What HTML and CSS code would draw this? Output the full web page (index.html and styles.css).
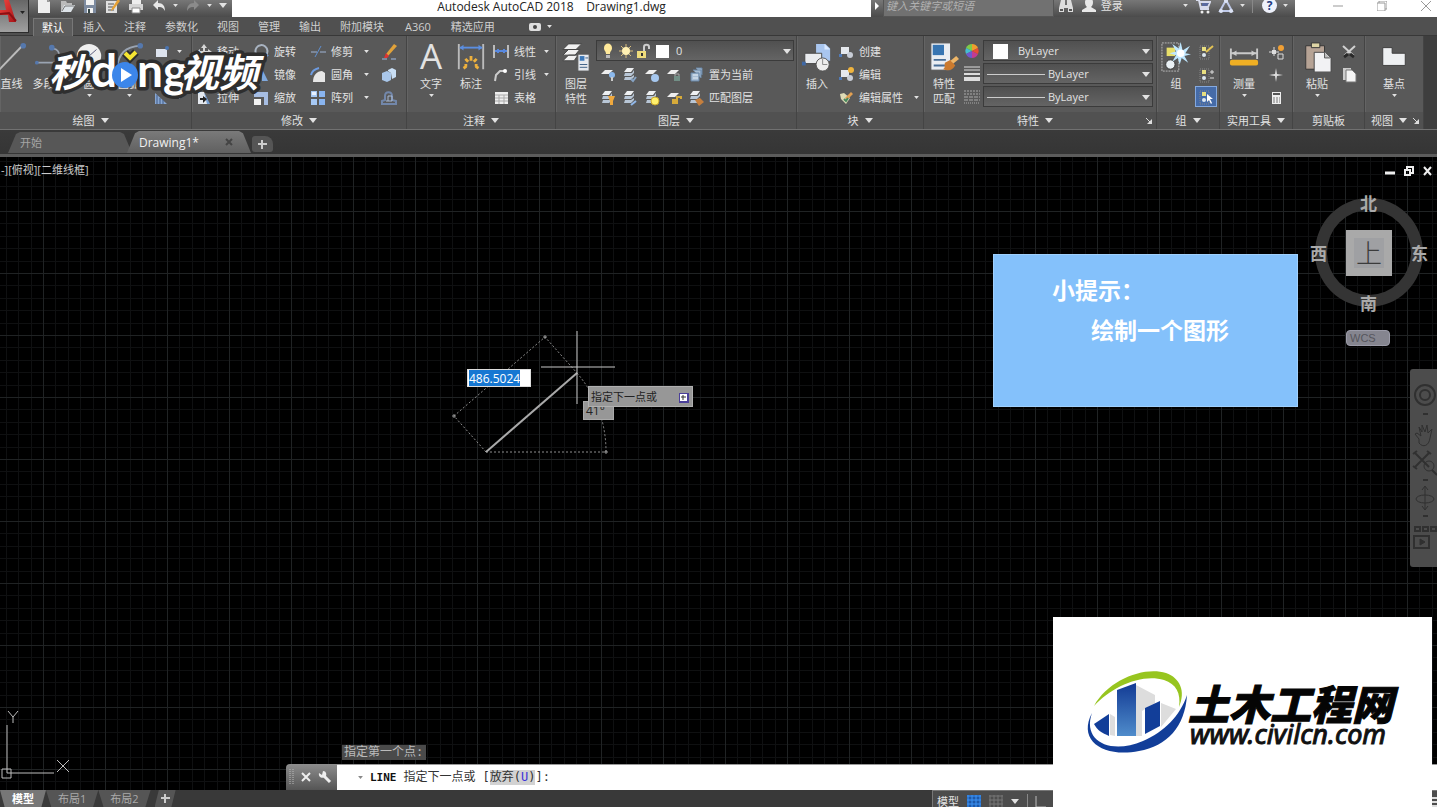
FILE: index.html
```html
<!DOCTYPE html>
<html lang="zh-CN">
<head>
  <meta charset="UTF-8" />
  <title>Autodesk AutoCAD 2018 Drawing1.dwg</title>
  <link rel="stylesheet" href="styles.css">
</head>
<body>
  <svg class="defs" aria-hidden="true">
    <linearGradient id="red" x1="0" y1="0" x2="1" y2="1"><stop offset="0" stop-color="#f0453f"/><stop offset="1" stop-color="#a81418"/></linearGradient>
    <linearGradient id="tower" x1="0" y1="0" x2="0" y2="1"><stop offset="0" stop-color="#123a94"/><stop offset="1" stop-color="#4f8ccb"/></linearGradient>
    <symbol id="down" viewBox="0 0 8 5"><path d="M0 0h8L4 5z" fill="currentColor"/></symbol>
    <symbol id="new" viewBox="0 0 16 16"><path d="M2 1h9l3 3v11H2z" fill="#eee"/><path d="M11 1v3h3" fill="#999"/></symbol>
    <symbol id="open" viewBox="0 0 16 16"><path d="M2 14V3h5l1 2h5v3" fill="#bbb"/><path d="M2 14l3-7h11l-4 7z" fill="#dde3e8"/><path d="M3 13l3-5h9" fill="none" stroke="#777"/></symbol>
    <symbol id="save" viewBox="0 0 16 16"><path d="M2 2h12v13H2z" fill="#7d8ba0"/><path d="M4 2h8v5H4zM5 10h6v5H5z" fill="#f2f2f2"/><path d="M6 11h2v4H6z" fill="#344"/></symbol>
    <symbol id="saveas" viewBox="0 0 16 16"><path d="M1 3h11v12H1z" fill="#e0e0e0"/><path d="M3 6h6M3 9h5M3 12h6" stroke="#555"/><path d="M7 10l6-9 2 2-6 8-3 2z" fill="#e6a135"/></symbol>
    <symbol id="print" viewBox="0 0 16 16"><path d="M4 1h9v5H4z" fill="#eee"/><path d="M1 6h14v6H1z" fill="#d5d5d5"/><path d="M4 10h8v5H4z" fill="#fff" stroke="#888"/></symbol>
    <symbol id="undo" viewBox="0 0 16 16"><path d="M2 7l5-5v3c5 0 7 3 7 8-2-4-4-4-7-4v3z" fill="#e8e8e8"/></symbol>
    <symbol id="redo" viewBox="0 0 16 16"><path d="M14 7L9 2v3c-5 0-7 3-7 8 2-4 4-4 7-4v3z" fill="#8b8b8b"/></symbol>
    <symbol id="find" viewBox="0 0 16 16"><path d="M3 2h4v5h2V2h4l2 8v4h-5v-4H6v4H1v-4z" fill="#ddd"/><path d="M2 11h3v2H2zM11 11h3v2h-3z" fill="#555"/></symbol>
    <symbol id="user" viewBox="0 0 16 16"><path d="M4 4c0-5 8-5 8 0 0 3-1 4-2 5l5 3v2H1v-2l5-3C5 8 4 7 4 4z" fill="#e8e8e8"/></symbol>
    <symbol id="cart" viewBox="0 0 16 16"><path d="M1 2h3l2 9h8M5 4h10l-2 5H6" fill="none" stroke="#d8dcec" stroke-width="2"/><path d="M7 5h7l-2 3H7z" fill="#5a6ba0"/><circle cx="7" cy="14" r="1.500" fill="#eee"/><circle cx="13" cy="14" r="1.500" fill="#eee"/></symbol>
    <symbol id="a360" viewBox="0 0 16 16"><path d="M8 2l6 11H2z" fill="none" stroke="#bfc9e8" stroke-width="2"/><circle cx="8" cy="3" r="2" fill="#dce3f5"/><circle cx="3" cy="13" r="2" fill="#dce3f5"/><circle cx="13" cy="13" r="2" fill="#dce3f5"/></symbol>
    <symbol id="line" viewBox="0 0 32 32"><path d="M2 30L27 4" stroke="#bbb" stroke-width="2"/><circle cx="28" cy="4" r="3" fill="#5578ad"/></symbol>
    <symbol id="pline" viewBox="0 0 32 32"><path d="M2 22h18c9 0 9-14 1-15" fill="none" stroke="#9aa4b2" stroke-width="2"/><circle cx="19" cy="6" r="3" fill="#5578ad"/><circle cx="3" cy="22" r="2" fill="#5578ad"/></symbol>
    <symbol id="circle" viewBox="0 0 32 32"><circle cx="16" cy="15" r="13" fill="#eee"/><path d="M16 15l8-7" stroke="#557"/></symbol>
    <symbol id="arc" viewBox="0 0 32 32"><path d="M3 28C5 12 12 5 28 4" fill="none" stroke="#9aa4b2" stroke-width="2"/><circle cx="28" cy="4" r="3" fill="#5578ad"/></symbol>
    <symbol id="rect" viewBox="0 0 16 16"><path d="M2 5h11v8H2z" fill="#dde3ee"/><circle cx="13" cy="4" r="2" fill="#4a74b0"/></symbol>
    <symbol id="ellipse" viewBox="0 0 16 16"><ellipse cx="8" cy="8" rx="6" ry="4" fill="none" stroke="#c5d0e0" stroke-width="2"/></symbol>
    <symbol id="hatch" viewBox="0 0 16 16"><path d="M1 3l12 11H1z" fill="#88a7d2"/><path d="M3 5v9M6 8v6M9 10v4" stroke="#405b86"/></symbol>
    <symbol id="move" viewBox="0 0 16 16"><path d="M8 0l3 4H9v3h3V5l4 3-4 3V9H9v3h2l-3 4-3-4h2V9H4v2L0 8l4-3v2h3V4H5z" fill="#d6d6d6"/></symbol>
    <symbol id="copy" viewBox="0 0 16 16"><circle cx="5" cy="6" r="4" fill="#ccc"/><circle cx="11" cy="10" r="4" fill="#86a9dc"/></symbol>
    <symbol id="stretch" viewBox="0 0 16 16"><path d="M2 2h6l5 12H2z" fill="#e4e8ee"/><path d="M8 2l6 12h-3" fill="#76a0d5"/><path d="M4 8h3V6l4 3-4 4v-3H4z" fill="#222"/></symbol>
    <symbol id="rotate" viewBox="0 0 16 16"><path d="M5 12A6 6 0 1 1 13 11" fill="none" stroke="#a9b4c2" stroke-width="2"/><path d="M10 11h6l-4 4z" fill="#6d97d0"/></symbol>
    <symbol id="mirror" viewBox="0 0 16 16"><path d="M7 2v12H1z" fill="#ddd"/><path d="M9 2v12h6z" fill="#80a9de"/></symbol>
    <symbol id="scale" viewBox="0 0 16 16"><path d="M1 2h14v13h-4V7H1z" fill="#a7bde2"/><path d="M1 9h7v6H1z" fill="#f2f2f2"/></symbol>
    <symbol id="trim" viewBox="0 0 16 16"><path d="M1 8h6M10 8h6" stroke="#9fb4d6"/><path d="M5 13l6-11" stroke="#5f8fd0"/></symbol>
    <symbol id="fillet" viewBox="0 0 16 16"><path d="M3 15C3 8 7 4 12 4l3 2v9z" fill="#e6e6e6"/><path d="M1 8c1-4 4-6 8-7" fill="none" stroke="#6d9be0" stroke-width="2"/></symbol>
    <symbol id="array" viewBox="0 0 16 16"><path d="M1 1h6v6H1zM1 9h6v6H1z" fill="#a6c8f4"/><path d="M9 1h6v6H9zM9 9h6v6H9z" fill="#89b4ef"/><path d="M2 2h4v3H2z" fill="#e8f1ff"/></symbol>
    <symbol id="erase" viewBox="0 0 16 16"><path d="M1 15h5M10 15h5" stroke="#9fbbe6"/><path d="M5 10l8-10 3 2-9 10z" fill="#e1a23a"/><path d="M3 14l2-5 3 3-2 2z" fill="#d33"/></symbol>
    <symbol id="explode" viewBox="0 0 16 16"><path d="M1 6l5-2 4 2v7l-4 2-5-2z" fill="#a9c7ea"/><path d="M7 3l4-2 4 2v7l-4 2-1-6-3-2z" fill="#c9dff5"/></symbol>
    <symbol id="offset" viewBox="0 0 16 16"><path d="M1 14h14v-3l-4-1V6c0-5-7-5-7 0v4l-3 1z" fill="none" stroke="#7287aa" stroke-width="2"/><path d="M5 11h6V6H7v5" fill="none" stroke="#a7b8d2"/></symbol>
    <symbol id="dim" viewBox="0 0 32 32"><path d="M3 2v27M29 2v27" stroke="#bbb" stroke-width="2"/><path d="M4 6h24" stroke="#5b8ee0" stroke-width="2"/><path d="M4 6l4-3v6zM28 6l-4-3v6z" fill="#5b8ee0"/><path d="M9 25h3M20 25h3M16 15v5M10 18l3 3M22 18l-3 3M8 28l3-2M24 28l-3-2" stroke="#eeb13d" stroke-width="3"/></symbol>
    <symbol id="linear" viewBox="0 0 16 16"><path d="M1 1v13M15 1v13" stroke="#bbb" stroke-width="2"/><path d="M2 7h12M5 5v4M11 5v4" stroke="#5888df" stroke-width="2"/></symbol>
    <symbol id="leader" viewBox="0 0 16 16"><path d="M2 14l1-6 4-4h5" fill="none" stroke="#ccc" stroke-width="2"/><circle cx="12" cy="4" r="2" fill="#fff"/></symbol>
    <symbol id="table" viewBox="0 0 16 16"><path d="M2 2h13v12H2z" fill="#eee"/><path d="M2 5h13M2 8h13M2 11h13M6 5v9M11 5v9" stroke="#aaa"/></symbol>
    <symbol id="layers" viewBox="0 0 32 32"><path d="M8 2h14l-6 6H2zM8 8h12l-5 6H2zM8 14h10l-4 6H2z" fill="#f1f1f1" stroke="#444"/><path d="M18 13h12v18H18z" fill="#e6e9ef" stroke="#555"/><path d="M20 15h5v5h-5z" fill="#3d79ba"/><path d="M20 24h8M20 27h8M26 17h3" stroke="#3b5d84"/></symbol>
    <symbol id="bulb" viewBox="0 0 16 16"><path d="M4 5c0-6 8-6 8 0 0 3-2 3-2 6H6c0-3-2-3-2-6z" fill="#ffe99a"/><path d="M6 12h4v3H6z" fill="#bbb"/></symbol>
    <symbol id="sun" viewBox="0 0 16 16"><path d="M8 1v14M1 8h14M3 3l10 10M13 3L3 13" stroke="#d9bd7c"/><circle cx="8" cy="8" r="4" fill="#fff0b3"/></symbol>
    <symbol id="lock" viewBox="0 0 16 16"><path d="M1 8h9v7H1z" fill="#eedb7b"/><path d="M8 8V4c0-3 5-3 5 0v2" fill="none" stroke="#ccc" stroke-width="2"/><path d="M5 10h2v3H5z" fill="#333"/></symbol>
    <symbol id="lay" viewBox="0 0 16 16"><path d="M5 3h8l-4 4H1z" fill="#eee"/></symbol>
    <symbol id="stack" viewBox="0 0 16 16"><path d="M5 1h7l-3 4H2z" fill="#eef0f2"/><path d="M3 6h7l2-3v3l-3 3H2zM3 10h6l3-2v2l-3 3H2z" fill="#b8c6d6"/></symbol>
    <symbol id="cur" viewBox="0 0 16 16"><path d="M3 6h8v8H3zM5 3h8v8M8 1h6v7" fill="#a8bed4" stroke="#6685a6"/><path d="M5 8h5M5 11h5" stroke="#e5eef7" fill="none"/></symbol>
    <symbol id="insert" viewBox="0 0 32 32"><path d="M15 2h10l5 5v13H15z" fill="#a9c6ef"/><path d="M24 2v6h6" fill="#dbe9ff"/><path d="M3 12h18v11H3z" fill="#e9ebee" stroke="#444"/><circle cx="22" cy="24" r="7" fill="#eee" stroke="#555"/><path d="M22 24v-6M22 24h5" stroke="#888"/><path d="M0 21h4v4H0z" fill="#3f68a5"/></symbol>
    <symbol id="block" viewBox="0 0 16 16"><path d="M3 3h8v7H3z" fill="#e5e8ed"/><circle cx="12" cy="11" r="3" fill="#c8cdd6"/><path d="M1 10h3v3H1z" fill="#517ab6"/></symbol>
    <symbol id="attr" viewBox="0 0 16 16"><path d="M2 4l4-1 6 5-4 6-5-5z" fill="#dedbb5"/><path d="M7 8l6-6 2 2-6 6z" fill="#e2a052"/><path d="M6 9l2 2 2-3" stroke="#46875d" fill="none" stroke-width="2"/></symbol>
    <symbol id="match" viewBox="0 0 32 32"><path d="M2 1h21v29H2z" fill="#e9edf2" stroke="#555"/><path d="M4 3h12v11H4z" fill="#3775b2"/><path d="M5 19h13M5 25h12" stroke="#476d96" stroke-width="2"/><path d="M17 22l6-3 5 6c-4 7-9 5-13 4 3-2 1-4 2-7z" fill="#cb7a2e"/><path d="M23 20l6-5 3 3-6 5z" fill="#eeb668"/></symbol>
    <symbol id="wheel" viewBox="0 0 16 16"><path d="M8 8V1a7 7 0 0 1 6 4z" fill="#f09d2d"/><path d="M8 8V1a7 7 0 0 0-6 4z" fill="#7ecb49"/><path d="M8 8L2 5a7 7 0 0 0 0 6z" fill="#45bcd2"/><path d="M8 8l-6 3a7 7 0 0 0 6 4z" fill="#6f58cc"/><path d="M8 8v7a7 7 0 0 0 6-4z" fill="#c33b92"/><path d="M8 8l6-3a7 7 0 0 1 0 6z" fill="#e94b35"/></symbol>
    <symbol id="weights" viewBox="0 0 16 16"><path d="M0 1h16M0 4h16" stroke="#ddd"/><path d="M0 8h16" stroke="#ddd" stroke-width="2"/><path d="M0 13h16" stroke="#ddd" stroke-width="4"/></symbol>
    <symbol id="types" viewBox="0 0 16 16"><path d="M0 2h16M0 5h16" stroke="#aaa" stroke-dasharray="2 1"/><path d="M0 8h16M0 11h16" stroke="#aaa" stroke-dasharray="4 1"/><path d="M0 14h16" stroke="#aaa" stroke-dasharray="1 1"/></symbol>
    <symbol id="group" viewBox="0 0 32 32"><path d="M1 1h18v30H1z" fill="none" stroke="#bbb" stroke-dasharray="2 1"/><path d="M6 6h9v9H6z" fill="#e8df69"/><circle cx="10" cy="24" r="5" fill="#e9f0f4" stroke="#333"/><path d="M21 0l2 9 8-5-5 8 6 1-7 2 4 7-7-5-2 7-2-7-6 4 4-7-7-2 7-2-4-8 7 5z" fill="#bfe7ff"/><circle cx="21" cy="12" r="4" fill="#fff"/></symbol>
    <symbol id="gsmall" viewBox="0 0 16 16"><path d="M2 2h9v13H2z" fill="none" stroke="#888" stroke-dasharray="1 1"/><path d="M4 3h4v4H4z" fill="#e8df80"/><circle cx="6" cy="11" r="2" fill="#dce7ef"/></symbol>
    <symbol id="measure" viewBox="0 0 32 32"><path d="M2 7v11M30 7v11M3 12h26" stroke="#c9c9c9" stroke-width="2"/><path d="M3 12l5-3v6zM29 12l-5-3v6z" fill="#ccc"/><rect x="1" y="19" width="30" height="6" rx="2" fill="#efaf24"/></symbol>
    <symbol id="qsel" viewBox="0 0 16 16"><path d="M6 3v9M1 8h10M10 10h5v5h-5z" stroke="#ddd" fill="none"/><path d="M4 6h4v4H4z" fill="#ddd"/><circle cx="13" cy="4" r="3" fill="#f1a035"/></symbol>
    <symbol id="point" viewBox="0 0 16 16"><path d="M8 1l1 6 6 1-6 1-1 6-1-6-6-1 6-1z" fill="#ddd"/></symbol>
    <symbol id="calc" viewBox="0 0 16 16"><path d="M4 2h9v12H4z" fill="#eee"/><path d="M5 4h7" stroke="#555" stroke-width="2"/><path d="M5 8h7M5 10h7M5 12h7" stroke="#777" stroke-dasharray="2 1"/></symbol>
    <symbol id="paste" viewBox="0 0 32 32"><path d="M4 4h20v25H4z" fill="#b6a395" stroke="#333"/><path d="M10 1h9v5h-9z" fill="#ded5a5" stroke="#333"/><path d="M13 11h12l6 6v15H13z" fill="#f2f2f4" stroke="#444"/><path d="M24 11v6h6" fill="#bbb" stroke="#555"/></symbol>
    <symbol id="cut" viewBox="0 0 16 16"><path d="M2 2l11 10M14 2L3 12" stroke="#d0d0d0" stroke-width="2"/><path d="M3 13l4-3M13 13l-4-3" stroke="#292929" stroke-width="3"/></symbol>
    <symbol id="clip" viewBox="0 0 16 16"><path d="M2 1h8v12H2z" fill="#ccc"/><path d="M5 3h6l4 4v8H5z" fill="#f4f4f4" stroke="#777"/></symbol>
    <symbol id="base" viewBox="0 0 32 32"><path d="M4 6h10v6h14v13H4z" fill="#eef0f2" stroke="#3d3d3d"/></symbol>
    <symbol id="launch" viewBox="0 0 8 8"><path d="M1 1l4 4" stroke="#ddd"/><path d="M7 2v5H2z" fill="#ddd"/></symbol>
    <symbol id="grid" viewBox="0 0 14 14"><path d="M0 1h14M0 5h14M0 9h14M0 13h14M1 0v14M5 0v14M9 0v14M13 0v14" stroke="currentColor"/></symbol>
  </svg>

  <header class="titlebar">
    <div class="quick">
      <button aria-label="新建"><svg class="i16"><use href="#new"/></svg></button>
      <button aria-label="打开"><svg class="i16"><use href="#open"/></svg></button>
      <button aria-label="保存"><svg class="i16"><use href="#save"/></svg></button>
      <button aria-label="另存为"><svg class="i16"><use href="#saveas"/></svg></button>
      <button aria-label="打印"><svg class="i16"><use href="#print"/></svg></button>
      <button aria-label="放弃"><svg class="i16"><use href="#undo"/></svg><svg class="tick"><use href="#down"/></svg></button>
      <button aria-label="重做"><svg class="i16"><use href="#redo"/></svg><svg class="tick"><use href="#down"/></svg></button>
      <button aria-label="自定义"><svg class="arrow"><use href="#down"/></svg></button>
    </div>
    <h1>Autodesk AutoCAD 2018 &nbsp;&nbsp; Drawing1.dwg</h1>
    <div class="infocenter">
      <button class="expand" aria-label="展开"><svg width="4" height="8"><path d="M0 0l4 4-4 4z" fill="#fff"/></svg></button>
      <input type="text" aria-label="搜索" placeholder="键入关键字或短语">
      <button aria-label="查找"><svg class="i16"><use href="#find"/></svg></button>
      <button class="login"><svg class="i16"><use href="#user"/></svg>登录<svg class="tick"><use href="#down"/></svg></button>
      <button aria-label="商店"><svg class="i16"><use href="#cart"/></svg></button>
      <button class="a360" aria-label="A360"><svg class="i16"><use href="#a360"/></svg><svg class="tick"><use href="#down"/></svg></button>
      <button class="help" aria-label="帮助"><span>?</span><svg class="tick"><use href="#down"/></svg></button>
    </div>
    <div class="window-buttons">
      <button aria-label="最小化"><svg width="10" height="10"><path d="M0 5h10" stroke="#999"/></svg></button>
      <button aria-label="还原"><svg width="10" height="10"><path d="M0 2h8v8H0zM2 2V0h8v8H8" fill="none" stroke="#999"/></svg></button>
      <button aria-label="关闭"><svg width="10" height="10"><path d="M0 0l10 10M10 0L0 10" stroke="#999"/></svg></button>
    </div>
    <button class="app-button" aria-label="应用程序菜单">
      <svg width="18" height="24"><path d="M0 0h9l7 22H9L8 15H0v-5h6L4 0z" fill="url(#red)"/><path d="M0 14l9-1 7 8" fill="none" stroke="#8c1013" stroke-width="2"/></svg>
      <svg class="tick"><use href="#down"/></svg>
    </button>
  </header>

  <nav class="ribbon-tabs">
    <a class="active" href="#">默认</a>
    <a href="#">插入</a>
    <a href="#">注释</a>
    <a href="#">参数化</a>
    <a href="#">视图</a>
    <a href="#">管理</a>
    <a href="#">输出</a>
    <a href="#">附加模块</a>
    <a class="latin-tab" href="#">A360</a>
    <a href="#">精选应用</a>
    <button class="min-ribbon" aria-label="最小化功能区"><svg width="12" height="8"><rect width="12" height="8" rx="2" fill="#ddd"/><circle cx="6" cy="4" r="2" fill="#444"/></svg><svg class="tick"><use href="#down"/></svg></button>
  </nav>

  <div class="ribbon">
    <section class="panel draw">
      <div class="tools">
        <button class="big first"><svg class="i32"><use href="#line"/></svg>直线</button>
        <button class="big"><svg class="i32"><use href="#pline"/></svg>多段线</button>
        <button class="big"><svg class="i32"><use href="#circle"/></svg>圆<svg class="tick"><use href="#down"/></svg></button>
        <button class="big"><svg class="i32"><use href="#arc"/></svg>圆弧<svg class="tick"><use href="#down"/></svg></button>
        <div class="col">
          <button aria-label="矩形"><svg class="i16"><use href="#rect"/></svg><svg class="tick"><use href="#down"/></svg></button>
          <button aria-label="椭圆"><svg class="i16"><use href="#ellipse"/></svg><svg class="tick"><use href="#down"/></svg></button>
          <button aria-label="图案填充"><svg class="i16"><use href="#hatch"/></svg><svg class="tick"><use href="#down"/></svg></button>
        </div>
      </div>
      <h2>绘图<svg class="arrow"><use href="#down"/></svg></h2>
    </section>

    <section class="panel modify">
      <div class="tools">
        <div class="col">
          <button><svg class="i16"><use href="#move"/></svg>移动</button>
          <button><svg class="i16"><use href="#copy"/></svg>复制</button>
          <button><svg class="i16"><use href="#stretch"/></svg>拉伸</button>
        </div>
        <div class="col">
          <button><svg class="i16"><use href="#rotate"/></svg>旋转</button>
          <button><svg class="i16"><use href="#mirror"/></svg>镜像</button>
          <button><svg class="i16"><use href="#scale"/></svg>缩放</button>
        </div>
        <div class="col wide">
          <button><svg class="i16"><use href="#trim"/></svg>修剪<svg class="tick"><use href="#down"/></svg></button>
          <button><svg class="i16"><use href="#fillet"/></svg>圆角<svg class="tick"><use href="#down"/></svg></button>
          <button><svg class="i16"><use href="#array"/></svg>阵列<svg class="tick"><use href="#down"/></svg></button>
        </div>
        <div class="col last">
          <button aria-label="删除"><svg class="i16"><use href="#erase"/></svg></button>
          <button aria-label="分解"><svg class="i16"><use href="#explode"/></svg></button>
          <button aria-label="偏移"><svg class="i16"><use href="#offset"/></svg></button>
        </div>
      </div>
      <h2>修改<svg class="arrow"><use href="#down"/></svg></h2>
    </section>

    <section class="panel annotate">
      <div class="tools">
        <button class="big"><span class="letter">A</span>文字<svg class="tick"><use href="#down"/></svg></button>
        <button class="big"><svg class="i32"><use href="#dim"/></svg>标注</button>
        <div class="col">
          <button><svg class="i16"><use href="#linear"/></svg>线性<svg class="tick"><use href="#down"/></svg></button>
          <button><svg class="i16"><use href="#leader"/></svg>引线<svg class="tick"><use href="#down"/></svg></button>
          <button><svg class="i16"><use href="#table"/></svg>表格</button>
        </div>
      </div>
      <h2>注释<svg class="arrow"><use href="#down"/></svg></h2>
    </section>

    <section class="panel layer">
      <div class="tools">
        <button class="big"><svg class="i32"><use href="#layers"/></svg>图层<br>特性</button>
        <div class="col">
          <div class="combo">
            <select aria-label="图层"><option>0</option></select>
            <span class="combo-icons"><svg class="i16"><use href="#bulb"/></svg><svg class="i16"><use href="#sun"/></svg><svg class="i16"><use href="#lock"/></svg><i class="swatch"></i></span>
            <svg class="arrow"><use href="#down"/></svg>
          </div>
          <div class="row">
            <button aria-label="关"><svg class="i16"><use href="#lay"/><circle cx="12" cy="8" r="3" fill="#8cb9ed"/><path d="M12 10v4" stroke="#ccc" stroke-width="2"/></svg></button>
            <button aria-label="隔离"><svg class="i16"><use href="#stack"/><path d="M9 12l2 2 3-4" stroke="#86a3c4" fill="none" stroke-width="2"/></svg></button>
            <button aria-label="冻结"><svg class="i16"><use href="#lay"/><circle cx="11" cy="11" r="4" fill="#a6c7ee"/></svg></button>
            <button aria-label="锁定"><svg class="i16"><use href="#lay"/><path d="M8 9h6v5H8z" fill="#728f86"/><path d="M9 9V7h4v2" stroke="#aaa" fill="none"/></svg></button>
            <button><svg class="i16"><use href="#cur"/></svg>置为当前</button>
          </div>
          <div class="row">
            <button aria-label="全部打开"><svg class="i16"><use href="#stack"/><path d="M8 6h7l-2 5v4h-3v-4z" fill="#efa83d"/></svg></button>
            <button aria-label="取消隔离"><svg class="i16"><use href="#stack"/><path d="M9 15l5-4" stroke="#91b8ea" stroke-width="2"/></svg></button>
            <button aria-label="全部解冻"><svg class="i16"><use href="#stack"/><circle cx="11" cy="11" r="4" fill="#fff06b" stroke="#cba92c"/></svg></button>
            <button aria-label="解锁"><svg class="i16"><use href="#lay"/><path d="M6 9h6v5H6z" fill="#d6aa3a"/><path d="M11 9V7h4v2" stroke="#d6aa3a" fill="none" stroke-width="2"/></svg></button>
            <button><svg class="i16"><use href="#stack"/><path d="M7 10l5-2 4 4-5 4z" fill="#c57f3e"/></svg>匹配图层</button>
          </div>
        </div>
      </div>
      <h2>图层<svg class="arrow"><use href="#down"/></svg></h2>
    </section>

    <section class="panel block">
      <div class="tools">
        <button class="big"><svg class="i32"><use href="#insert"/></svg>插入</button>
        <div class="col">
          <button><svg class="i16"><use href="#block"/></svg>创建</button>
          <button><svg class="i16"><use href="#block"/><circle cx="13" cy="3" r="3" fill="#efb43e"/></svg>编辑</button>
          <button><svg class="i16"><use href="#attr"/></svg>编辑属性<svg class="tick"><use href="#down"/></svg></button>
        </div>
      </div>
      <h2>块<svg class="arrow"><use href="#down"/></svg></h2>
    </section>

    <section class="panel props">
      <div class="tools">
        <button class="big"><svg class="i32"><use href="#match"/></svg>特性<br>匹配</button>
        <div class="col icons">
          <svg class="i16"><use href="#wheel"/></svg>
          <svg class="i16"><use href="#weights"/></svg>
          <svg class="i16"><use href="#types"/></svg>
        </div>
        <div class="col combos">
          <div class="combo color"><select aria-label="颜色"><option>ByLayer</option></select><span class="combo-icons"><i class="swatch"></i></span><svg class="arrow"><use href="#down"/></svg></div>
          <div class="combo lined"><select aria-label="线宽"><option>ByLayer</option></select><span class="combo-icons"><i class="stroke"></i></span><svg class="arrow"><use href="#down"/></svg></div>
          <div class="combo lined"><select aria-label="线型"><option>ByLayer</option></select><span class="combo-icons"><i class="stroke"></i></span><svg class="arrow"><use href="#down"/></svg></div>
        </div>
      </div>
      <h2>特性<svg class="arrow"><use href="#down"/></svg><svg class="launch"><use href="#launch"/></svg></h2>
    </section>

    <section class="panel group">
      <div class="tools">
        <button class="big"><svg class="i32"><use href="#group"/></svg>组</button>
        <div class="col">
          <button aria-label="组编辑"><svg class="i16"><use href="#gsmall"/><path d="M8 8l7-6" stroke="#e4c354" stroke-width="2"/></svg></button>
          <button aria-label="解除编组"><svg class="i16"><use href="#gsmall"/><path d="M12 5h4M14 3v4M12 11h4" stroke="#ddd"/></svg></button>
          <button class="on" aria-label="启用组选择"><svg class="i16"><use href="#gsmall"/><path d="M9 5v8l2-2 2 4 1-1-2-4h3z" fill="#fff"/></svg></button>
        </div>
      </div>
      <h2>组<svg class="arrow"><use href="#down"/></svg></h2>
    </section>

    <section class="panel utils">
      <div class="tools">
        <button class="big"><svg class="i32"><use href="#measure"/></svg>测量<svg class="tick"><use href="#down"/></svg></button>
        <div class="col">
          <button aria-label="快速选择"><svg class="i16"><use href="#qsel"/></svg></button>
          <button aria-label="点坐标"><svg class="i16"><use href="#point"/></svg></button>
          <button aria-label="计算器"><svg class="i16"><use href="#calc"/></svg></button>
        </div>
      </div>
      <h2>实用工具<svg class="arrow"><use href="#down"/></svg></h2>
    </section>

    <section class="panel clipboard">
      <div class="tools">
        <button class="big"><svg class="i32"><use href="#paste"/></svg>粘贴<svg class="tick"><use href="#down"/></svg></button>
        <div class="col">
          <button aria-label="剪切"><svg class="i16"><use href="#cut"/></svg></button>
          <button aria-label="复制"><svg class="i16"><use href="#clip"/></svg></button>
        </div>
      </div>
      <h2>剪贴板</h2>
    </section>

    <section class="panel view">
      <div class="tools">
        <button class="big"><svg class="i32"><use href="#base"/></svg>基点<svg class="tick"><use href="#down"/></svg></button>
      </div>
      <h2>视图<svg class="arrow"><use href="#down"/></svg><svg class="launch"><use href="#launch"/></svg></h2>
    </section>

    <!-- video brand on top of the ribbon -->
    <svg class="brand" width="224" height="64" viewBox="0 0 224 64">
      <g class="brand-text">
        <text x="6" y="46" class="han">秒</text>
        <text x="48" y="46" class="latin">d</text>
        <text x="94" y="46" class="latin">ng</text>
        <text x="137" y="46" class="han">视频</text>
      </g>
      <circle cx="82" cy="34" r="13" fill="#3c86ea"/>
      <path d="M78 27l11 7-11 7z" fill="#fff"/>
      <path d="M82 12l5 5 6-6" fill="none" stroke="#2e2e2e" stroke-width="8"/>
      <path d="M82 12l5 5 6-6" fill="none" stroke="#f5e532" stroke-width="4"/>
    </svg>
  </div>

  <nav class="file-tabs">
    <a class="file" href="#"><span>开始</span></a>
    <a class="file active" href="#"><span>Drawing1*</span><svg width="8" height="8"><path d="M1 1l6 6M7 1L1 7" stroke="#444" stroke-width="2"/></svg></a>
    <button class="add" aria-label="新图形"><svg width="9" height="9"><path d="M4 0v9M0 4h9" stroke="#ccc" stroke-width="2"/></svg></button>
  </nav>

  <main class="canvas">
    <p class="viewport-label">-][俯视][二维线框]</p>
    <div class="doc-buttons">
      <button aria-label="最小化"><svg width="10" height="10"><path d="M0 7h10" stroke="#eee" stroke-width="3"/></svg></button>
      <button aria-label="还原"><svg width="10" height="10"><path d="M1 4h5v5H1zM3 3V1h6v6H7" fill="none" stroke="#eee" stroke-width="2"/></svg></button>
      <button aria-label="关闭"><svg width="10" height="10"><path d="M1 1l7 8M8 1L1 9" stroke="#eee" stroke-width="2"/></svg></button>
    </div>

    <svg class="sketch" width="700" height="320" fill="none">
      <g stroke="#8d8d8d" stroke-dasharray="2 2">
        <path d="M486 295L454 259L545 180L577 216"/>
        <path d="M486 295H606M577 216A120 120 0 0 1 606 295"/>
      </g>
      <path d="M486 295L577 216" stroke="#a9a9a9" stroke-width="2"/>
      <path d="M541 210h74M577 174v73" stroke="#c8c8c8"/>
      <path d="M453 258h2v2h-2zM544 179h2v2h-2zM605 294h2v2h-2z" stroke="#999"/>
    </svg>
    <input class="length" id="length" type="text" aria-label="长度" value="486.5024">
    <span class="angle">41°</span>
    <div class="prompt">指定下一点或<svg width="10" height="10"><path d="M0 0h10v10H0z" fill="#4a3f9a"/><path d="M1 1h7v7H1z" fill="#fff"/><path d="M4 2v5M2 4h5" stroke="#333"/></svg></div>

    <aside class="tip">
      <h3>小提示：</h3>
      <p>绘制一个图形</p>
    </aside>

    <div class="viewcube">
      <span class="north">北</span>
      <span class="west">西</span>
      <button>上</button>
      <span class="east">东</span>
      <span class="south">南</span>
    </div>
    <button class="wcs">WCS</button>

    <svg class="navbar" width="27" height="198" fill="none" stroke="#303030">
      <circle cx="15" cy="26" r="10" stroke-width="2"/><circle cx="15" cy="26" r="5" stroke-width="2"/>
      <path d="M13 45h5M13 111h5M13 147h5" stroke-width="2"/>
      <path d="M9 70l-4-5 2-1 4 3-2-9 3 5V56l3 7 2-7 1 8 4-4-2 9c-1 8-7 10-11 5z"/>
      <path d="M5 84l14 14M5 98l14-14M3 85l4-3M3 97l4 3M17 82l4 3" stroke-width="2"/><circle cx="19" cy="97" r="5"/><path d="M22 101l5 5" stroke-width="2"/>
      <path d="M15 118v22M12 121l3-4 3 4M12 137l3 4 3-4"/><ellipse cx="15" cy="130" rx="9" ry="4"/>
      <path d="M5 158h5v4H5zM13 158h5v4h-5zM21 158h5v4h-5zM4 167h15v12H4z" stroke-width="2"/><path d="M10 170l5 3-5 3z" fill="#303030"/>
    </svg>

    <svg class="ucs" width="80" height="80" fill="none" stroke="#bdbdbd">
      <path d="M7 18v48h47M2 62h9v9H2z"/>
      <path d="M8 4l5 6 5-6M13 10v6M57 53l12 12M69 53L57 65"/>
    </svg>

    <div class="command">
      <p class="history">指定第一个点:</p>
      <div class="cmdline">
        <div class="handle">
          <svg width="5" height="16"><path d="M1 0v16M4 0v16" stroke="#bbb" stroke-dasharray="1 1"/></svg>
          <button aria-label="关闭"><svg width="10" height="10"><path d="M1 1l8 8M9 1L1 9" stroke="#eee" stroke-width="2"/></svg></button>
          <button aria-label="自定义"><svg width="14" height="14"><path d="M6 6l6 6" stroke="#eee" stroke-width="3"/><path d="M1 3l3 2 1-4c4 0 4 5 2 6C4 9 0 7 1 3z" fill="#eee"/></svg></button>
        </div>
        <div class="entry"><svg class="tick"><use href="#down"/></svg><b>LINE</b><span>指定下一点或</span><span>[<button>放弃(<em>U</em>)</button>]:</span></div>
      </div>
    </div>
  </main>

  <footer class="status">
    <nav class="layout-tabs">
      <a class="active" href="#">模型</a>
      <a href="#">布局1</a>
      <a href="#">布局2</a>
      <button aria-label="新建布局"><svg width="9" height="9"><path d="M4 0v9M0 4h9" stroke="#ccc" stroke-width="2"/></svg></button>
    </nav>
    <div class="status-tools">
      <button>模型</button>
      <button class="blue" aria-label="栅格"><svg width="14" height="14"><use href="#grid"/></svg></button>
      <button class="dim" aria-label="捕捉"><svg width="14" height="14"><use href="#grid"/></svg></button>
      <button aria-label="捕捉设置"><svg class="arrow"><use href="#down"/></svg></button>
      <button class="ortho" aria-label="正交"><svg width="12" height="12"><path d="M2 0v11h10" fill="none" stroke="#bbb"/></svg></button>
      <button aria-label="极轴"><svg width="14" height="14"><circle cx="7" cy="7" r="6" fill="#2c7ad6"/></svg></button>
      <button class="custom" aria-label="自定义"><svg width="10" height="10"><path d="M0 1h10M0 5h10M0 9h10" stroke="#ddd" stroke-width="2"/></svg></button>
    </div>
  </footer>

  <div class="sponsor">
    <svg width="379" height="190" viewBox="0 0 379 190">
      <path d="M41 89C55 63 91 49 113 56c14 5 20 18 13 34 2-14-3-23-15-27-22-7-53 7-70 26z" fill="#97c51f"/>
      <path d="M39 96c-10 28 18 42 51 28 21-9 37-25 44-46-2 32-20 51-48 56-35 7-62-10-47-38z" fill="#123e99"/>
      <path d="M41 107l15-10v22c-7-3-12-6-15-12z" fill="#123e99"/>
      <path d="M57 97l5 3v19l-5-1zM83 68l19 10v8l-13 8v25h-6zM108 86l15 6-15 18z" fill="#ddd"/>
      <path d="M64 73l19-7v53H64z" fill="url(#tower)"/>
      <path d="M92 91l15-7v25l-15 8z" fill="#123e99"/>
      <text class="sponsor-name" x="135" y="103">土木工程网</text>
      <text class="sponsor-url" x="137" y="127">www.civilcn.com</text>
    </svg>
  </div>

  <script>
    const lengthBox = document.getElementById("length");
    lengthBox.focus();
    lengthBox.select();
  </script>
</body>
</html>
```
FILE: styles.css
```css
* {
  box-sizing: border-box;
}
body {
  margin: 0;
  height: 100vh;
  display: flex;
  flex-direction: column;
  overflow: hidden;
  background: #383838;
  color: #e2e2e2;
  font-family: "Open Sans", "Noto Sans CJK SC", sans-serif;
  font-size: 11px;
  line-height: 15px;
}
button, input, select {
  font: inherit;
  color: inherit;
}
button {
  display: flex;
  align-items: center;
  padding: 0;
  border: none;
  background: none;
}
a {
  color: inherit;
  text-decoration: none;
}
h1, h2, h3, p {
  margin: 0;
  font-weight: normal;
}
svg {
  display: block;
  flex: none;
}
.defs {
  position: absolute;
  width: 0;
  height: 0;
}
.i16 {
  width: 16px;
  height: 16px;
}
.i32 {
  width: 30px;
  height: 30px;
}
.arrow {
  width: 8px;
  height: 5px;
}
.tick {
  width: 5px;
  height: 3px;
}

/* title bar */
.titlebar {
  position: relative;
  display: flex;
  flex: none;
  height: 17px;
  background: #fff;
}
.quick, .infocenter {
  display: flex;
  align-items: center;
  height: 17px;
  padding-bottom: 6px;
  background: linear-gradient(#777, #4b4b4b);
}
.quick {
  width: 232px;
  padding-left: 36px;
  gap: 7px;
}
.quick button, .a360, .help {
  gap: 6px;
}
.titlebar h1 {
  flex: 1;
  color: #222;
  font-size: 12px;
  line-height: 13px;
  text-align: center;
}
.infocenter {
  width: 424px;
}
.infocenter button {
  margin-right: 7px;
}
.infocenter .expand {
  width: 12px;
  padding-left: 4px;
  margin: 0;
}
.infocenter input {
  width: 172px;
  height: 17px;
  margin: 6px 4px 0 0;
  padding: 0 2px 6px;
  border: 1px solid #555;
  border-top: none;
  background: #717171;
}
.infocenter input::placeholder {
  color: #b0b0b0;
  font-style: italic;
}
.infocenter .login {
  width: 108px;
  gap: 4px;
}
.login .tick {
  margin-left: auto;
}
.help {
  padding-left: 9px;
  border-left: 1px solid #888;
}
.help span {
  width: 15px;
  height: 15px;
  border-radius: 50%;
  background: #eef1fb;
  color: #223a80;
  font-weight: bold;
  font-size: 12px;
}
.window-buttons {
  display: flex;
  justify-content: space-between;
  width: 142px;
  height: 11px;
  padding: 0 6px 0 38px;
}
.app-button {
  position: absolute;
  z-index: 2;
  top: 0;
  left: 0;
  width: 29px;
  height: 33px;
  padding-bottom: 8px;
  gap: 2px;
  border: solid #2c2c2c;
  border-width: 0 1px 1px 0;
  background: linear-gradient(#666, #a0a0a0);
  color: #222;
}

/* ribbon */
.ribbon-tabs {
  display: flex;
  flex: none;
  align-items: flex-end;
  gap: 1px;
  height: 19px;
  padding-left: 33px;
  border-bottom: 1px solid #383838;
  background: #505050;
}
.ribbon-tabs a {
  height: 17px;
  padding: 1px 9px 0;
  color: #cfcfcf;
}
.ribbon-tabs .active {
  height: 18px;
  margin-bottom: -1px;
  border: 1px solid #777;
  border-bottom: none;
  padding: 1px 8px 0;
  background: #5c5c5c;
  color: #fff;
}
.ribbon-tabs .latin-tab {
  padding: 1px 10px 0 11px;
}
.min-ribbon {
  height: 17px;
  margin-left: 24px;
  gap: 6px;
}
.ribbon {
  position: relative;
  display: flex;
  flex: none;
  height: 94px;
  border-bottom: 1px solid #717171;
  background: #3e3e3e;
}
.panel {
  display: flex;
  flex: none;
  flex-direction: column;
  border-right: 1px solid #444;
  box-shadow: inset 1px 0 #646464;
  background: #595959;
}
.panel h2 {
  position: relative;
  display: flex;
  align-items: center;
  justify-content: center;
  gap: 6px;
  height: 17px;
  background: #515151;
  font-size: 11px;
}
.launch {
  position: absolute;
  right: 3px;
  width: 8px;
  height: 8px;
}
.tools {
  display: flex;
  height: 76px;
  padding-top: 4px;
}
.big {
  flex: none;
  flex-direction: column;
  width: 40px;
  padding-top: 2px;
  white-space: nowrap;
}
.big .i32, .letter {
  margin-bottom: 4px;
}
.big .tick {
  margin-top: 3px;
}
.letter {
  height: 30px;
  font-size: 35px;
  line-height: 28px;
}
.col {
  flex: none;
}
.col > * {
  height: 23px;
}
.col button {
  gap: 5px;
  white-space: nowrap;
}
.draw {
  width: 192px;
}
.draw .first {
  width: 23px;
}
.draw .big:nth-child(2) {
  width: 46px;
  padding-left: 6px;
}
.draw .col {
  padding-left: 5px;
}
.draw .col button {
  gap: 7px;
}
.draw h2, .props h2, .view h2 {
  padding-right: 10px;
}
.modify {
  width: 215px;
}
.modify .tools {
  padding-left: 4px;
}
.modify .col {
  width: 57px;
}
.modify .wide {
  width: 71px;
}
.modify .last {
  width: 16px;
}
.wide .tick, .block .tick {
  margin-left: 6px;
}
.annotate {
  width: 149px;
}
.annotate .tools {
  padding-left: 4px;
}
.annotate .col {
  padding-left: 2px;
}
.annotate .col .tick {
  margin-left: 3px;
}
.layer {
  width: 241px;
}
.layer .row {
  display: flex;
  gap: 6px;
  padding-left: 4px;
}
.combo {
  position: relative;
  width: 198px;
}
.combo select {
  display: block;
  width: 100%;
  height: 21px;
  padding: 0 0 0 79px;
  appearance: none;
  border: 1px solid #3b3b3b;
  border-radius: 0;
  background: linear-gradient(#505050, #646464);
}
.combo-icons {
  position: absolute;
  top: 3px;
  left: 4px;
  display: flex;
  align-items: center;
  gap: 2px;
  height: 16px;
}
.combo .arrow {
  position: absolute;
  top: 9px;
  right: 3px;
}
.swatch {
  width: 13px;
  height: 13px;
  margin-left: 2px;
  background: #fff;
}
.color .swatch {
  width: 15px;
  height: 15px;
  margin-left: 6px;
}
.block {
  width: 127px;
}
.block .tools {
  gap: 1px;
}
.props {
  width: 233px;
}
.props .icons {
  width: 19px;
}
.props .icons svg {
  height: 16px;
  margin: 3px 0 7px;
}
.props .combo {
  width: 170px;
}
.props .combo select {
  padding-left: 64px;
}
.props .color select {
  padding-left: 34px;
}
.stroke {
  width: 58px;
  height: 1px;
  background: #ccc;
}
.group {
  width: 63px;
}
.group .big {
  width: 38px;
}
.group .col button {
  width: 22px;
  justify-content: center;
}
.group .on {
  height: 21px;
  border: 1px solid #84a9df;
  background: #456ba8;
}
.utils {
  width: 73px;
}
.utils .tools, .clipboard .tools {
  gap: 4px;
  padding-left: 4px;
}
.clipboard {
  width: 72px;
}
.view {
  width: 59px;
}
.view .tools {
  justify-content: center;
}
.brand {
  position: absolute;
  top: 5px;
  left: 43px;
}
.brand-text {
  fill: #fff;
  stroke: #2e2e2e;
  stroke-width: 7px;
  stroke-linejoin: round;
  paint-order: stroke;
  font-style: italic;
  font-weight: bold;
}
.han {
  font-family: "Noto Sans CJK SC", sans-serif;
  font-size: 39px;
}
.latin {
  font-family: Lato, sans-serif;
  font-size: 46px;
  font-style: normal;
}

/* drawing tabs */
.file-tabs {
  display: flex;
  flex: none;
  align-items: flex-end;
  height: 27px;
  padding: 0 0 1px 8px;
  border-bottom: 3px solid #5c5c5c;
  background: linear-gradient(#3a3a3a, #353535);
}
.file {
  display: flex;
  align-items: center;
  justify-content: space-between;
  width: 124px;
  height: 21px;
  margin-right: -5px;
  padding: 0 18px 0 12px;
  clip-path: polygon(0 100%, 8px 10%, 12px 0, 112px 0, 116px 10%, 100% 100%);
  background: #575757;
  color: #a5a5a5;
}
.file.active {
  height: 22px;
  background: linear-gradient(#7a7a7a, #606060);
  color: #f0f0f0;
  font-size: 12px;
}
.add {
  justify-content: center;
  width: 21px;
  height: 16px;
  margin: 0 0 1px 6px;
  border-radius: 3px 8px 3px 3px;
  background: #555;
}

/* model space */
.canvas {
  position: relative;
  flex: 1;
  min-height: 0;
  background-color: #000;
  background-image:
    linear-gradient(90deg, #202324 1px, transparent 1px),
    linear-gradient(#202324 1px, transparent 1px),
    linear-gradient(90deg, transparent 12px, #0f1011 12px 13px, transparent 13px 25px, #0f1011 25px 26px, transparent 26px 37px, #0f1011 37px 38px, transparent 38px 50px, #0f1011 50px 51px, transparent 51px),
    linear-gradient(transparent 12px, #0f1011 12px 13px, transparent 13px 25px, #0f1011 25px 26px, transparent 26px 37px, #0f1011 37px 38px, transparent 38px 50px, #0f1011 50px 51px, transparent 51px);
  background-size: 62px 62px;
  background-position: 43px 54px;
}
.viewport-label {
  position: absolute;
  top: 5px;
  left: 1px;
  color: #ccc;
}
.doc-buttons {
  position: absolute;
  top: 9px;
  right: 4px;
  display: flex;
  gap: 9px;
}
.sketch {
  position: absolute;
  top: 0;
  left: 0;
}
.length {
  position: absolute;
  top: 212px;
  left: 467px;
  width: 64px;
  height: 18px;
  padding: 0 1px;
  border: 1px solid #ddd;
  outline: none;
  background: #fff;
  color: #222;
  font-size: 12px;
}
.length::selection {
  background: #1677d2;
  color: #fff;
}
.angle, .prompt {
  position: absolute;
  background: #979797;
  color: #222;
}
.angle {
  top: 244px;
  left: 583px;
  width: 31px;
  height: 19px;
  padding: 1px 2px;
  border: 1px solid #aaa;
  font-size: 12px;
}
.prompt {
  top: 229px;
  left: 588px;
  display: flex;
  align-items: center;
  justify-content: space-between;
  width: 105px;
  height: 21px;
  padding: 0 3px 0 2px;
  border: 1px solid #b0b0b0;
}
.prompt svg {
  margin-top: 3px;
}
.tip {
  position: absolute;
  top: 97px;
  right: 139px;
  width: 305px;
  height: 153px;
  padding: 15px 0 0 58px;
  border: 1px solid #9fd0fd;
  background: #84c1fb;
  color: #fff;
  line-height: 40px;
}
.tip h3, .tip p {
  font-size: 23px;
  font-weight: bold;
}
.tip p {
  padding-left: 39px;
}
.viewcube {
  position: absolute;
  top: 41px;
  right: 14px;
  width: 108px;
  height: 109px;
  border: 12px solid #343434;
  border-radius: 50%;
  color: #aaa;
  font-size: 17px;
  font-weight: bold;
  line-height: 18px;
}
.viewcube span, .viewcube button {
  position: absolute;
}
.viewcube button {
  top: 20px;
  left: 19px;
  justify-content: center;
  width: 46px;
  height: 46px;
  border: 8px solid #a9a9a9;
  background: #9fa0a3;
  color: #3b3b3b;
  font-size: 26px;
  font-weight: 300;
}
.north {
  top: -15px;
  left: 33px;
}
.south {
  bottom: -18px;
  left: 33px;
}
.west {
  top: 35px;
  left: -17px;
}
.east {
  top: 35px;
  right: -17px;
}
.wcs {
  position: absolute;
  top: 173px;
  right: 47px;
  width: 44px;
  height: 16px;
  padding-left: 3px;
  border: 1px solid #9b9ba8;
  border-radius: 4px;
  background: #85858f;
  color: #55555c;
  font-family: "Liberation Sans", sans-serif;
}
.navbar {
  position: absolute;
  top: 212px;
  right: 0;
  border-radius: 3px 0 0 3px;
  background: #4c4c4c;
}
.ucs {
  position: absolute;
  bottom: 3px;
  left: 0;
}
.command {
  position: absolute;
  right: 0;
  bottom: 0;
  left: 286px;
  font-family: "DejaVu Sans Mono", "Noto Sans CJK SC", monospace;
  font-size: 12px;
}
.history {
  width: 84px;
  height: 15px;
  margin: 0 0 4px 56px;
  padding-left: 2px;
  background: #4a4a4a;
  color: #bbb;
  white-space: nowrap;
}
.cmdline {
  display: flex;
  height: 26px;
}
.handle {
  display: flex;
  align-items: center;
  gap: 7px;
  width: 51px;
  padding-left: 3px;
  border-radius: 4px 0 0 0;
  background: linear-gradient(#8d8d8d, #555);
}
.entry {
  display: flex;
  flex: 1;
  align-items: center;
  gap: 7px;
  padding-left: 21px;
  border-top: 1px solid #999;
  background: #fff;
  color: #333;
}
.entry .tick {
  color: #888;
}
.entry b {
  color: #111;
  font-size: 11px;
}
.entry button {
  display: inline;
  background: #d2d2d2;
}
.entry em {
  color: #3a30d8;
  font-style: normal;
}

/* status bar */
.status {
  display: flex;
  flex: none;
  justify-content: space-between;
  height: 17px;
  background: #393939;
}
.layout-tabs {
  display: flex;
}
.layout-tabs a, .layout-tabs button {
  height: 17px;
  padding: 1px 12px;
  clip-path: polygon(0 0, 100% 0, 90% 100%, 10% 100%);
  background: #555;
  color: #aaa;
}
.layout-tabs .active {
  background: #777;
  color: #fff;
  font-weight: bold;
}
.layout-tabs button {
  margin-left: 4px;
  padding: 0 6px;
  clip-path: polygon(20% 0, 100% 0, 80% 100%, 0 100%);
}
.status-tools {
  display: flex;
  align-items: center;
  gap: 8px;
  width: 505px;
  padding: 5px 0 0 4px;
  border-top: 1px solid #777;
  border-left: 1px solid #777;
  background: #4c4c4c;
}
.blue {
  color: #3d93f5;
  background: #1d58a8;
}
.dim {
  color: #777;
}
.ortho {
  height: 15px;
  padding-left: 6px;
  border-left: 1px solid #888;
}
.custom {
  margin-left: auto;
}

/* sponsor card */
.sponsor {
  position: fixed;
  right: 5px;
  bottom: 0;
  background: #fff;
}
.sponsor-name {
  fill: #050505;
  stroke: #050505;
  stroke-width: 1px;
  font-family: "Noto Sans CJK SC", sans-serif;
  font-size: 41px;
  font-style: italic;
  font-weight: 900;
}
.sponsor-url {
  fill: #111;
  stroke: #111;
  stroke-width: 1px;
  font-family: "Noto Sans", sans-serif;
  font-size: 27px;
  font-style: italic;
}
```
